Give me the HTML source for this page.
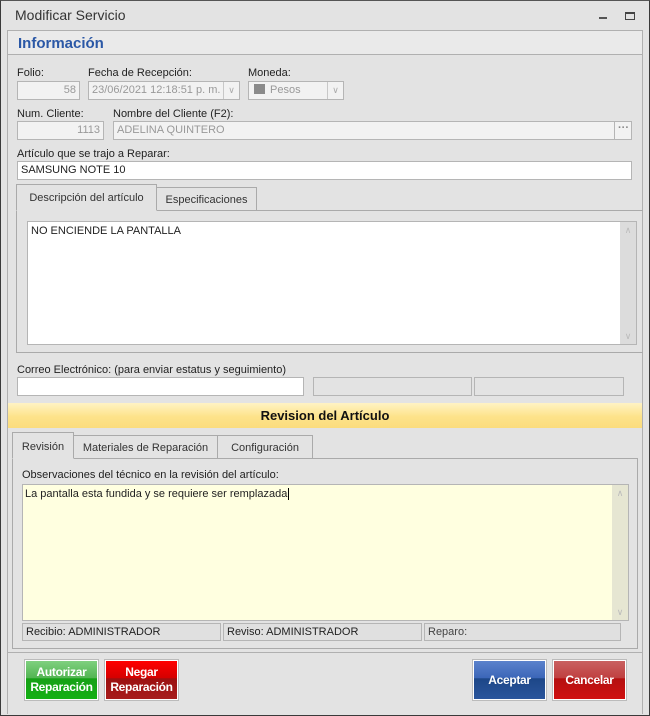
<!DOCTYPE html><html><head><meta charset="utf-8"><style>
*{box-sizing:border-box;margin:0;padding:0}
body{width:650px;height:716px;background:#e3e3e3;font-family:"Liberation Sans",sans-serif;font-size:11px;color:#222;position:relative;overflow:hidden}
.a{position:absolute}
.win{left:0;top:0;width:650px;height:716px;border:1px solid #3a3a3a;border-top-color:#555}
.lbl{position:absolute;font-size:11px;color:#222;white-space:nowrap}
.in{position:absolute;border:1px solid #b5b5b5;background:#f2f2f2;color:#999;font-size:11px;line-height:16px;padding:0 3px;white-space:nowrap;overflow:hidden}
.wh{background:#fff;color:#222}
.dd{position:absolute;border-left:1px solid #c8c8c8;top:0;bottom:0;right:0;width:16px;color:#aaa;font-size:9px;text-align:center;line-height:16px}
.tab{position:absolute;border:1px solid #aaa;border-bottom:none;background:#e3e3e3;font-size:11px;text-align:center;color:#333}
.btn{position:absolute;width:73px;height:40px;border:1px solid #fff;color:#fff;font-weight:bold;font-size:12px;text-align:center;font-family:"Liberation Sans Narrow","Liberation Sans",sans-serif;display:flex;align-items:center;justify-content:center;line-height:15px;box-shadow:0 0 0 1px #bbb;letter-spacing:-0.3px}
.sb{position:absolute;background:#dcdcdc;width:16px;color:#bbb;font-size:9px;text-align:center}
</style></head><body>
<div class="a win"></div>
<div class="a" style="left:15px;top:7px;font-size:14px;color:#333">Modificar Servicio</div>
<div class="a" style="left:599px;top:17px;width:8px;height:2px;background:#555"></div>
<div class="a" style="left:625px;top:12px;width:10px;height:8px;border:1px solid #444;border-top-width:2px"></div>
<!-- panel -->
<div class="a" style="left:7px;top:30px;width:636px;height:684px;border:1px solid #b0b0b0;border-bottom:none"></div>
<div class="a" style="left:8px;top:31px;width:634px;height:24px;background:#eaeaea;border-bottom:1px solid #b0b0b0"></div>
<div class="a" style="left:18px;top:35px;font-size:15px;font-weight:bold;color:#2b58a6">Información</div>

<div class="lbl" style="left:17px;top:67px">Folio:</div>
<div class="lbl" style="left:88px;top:67px">Fecha de Recepción:</div>
<div class="lbl" style="left:248px;top:67px">Moneda:</div>
<div class="in" style="left:17px;top:81px;width:63px;height:19px;text-align:right;line-height:17px">58</div>
<div class="in" style="left:88px;top:81px;width:152px;height:19px;line-height:17px">23/06/2021 12:18:51 p. m.<span class="dd">∨</span></div>
<div class="in" style="left:248px;top:81px;width:96px;height:19px;line-height:17px"><span style="display:inline-block;width:11px;height:10px;background:#8a8a8a;vertical-align:-1px;margin:0 5px 0 2px"></span>Pesos<span class="dd">∨</span></div>

<div class="lbl" style="left:17px;top:108px">Num. Cliente:</div>
<div class="lbl" style="left:113px;top:108px">Nombre del Cliente (F2):</div>
<div class="in" style="left:17px;top:121px;width:87px;height:19px;text-align:right;line-height:17px">1113</div>
<div class="in" style="left:113px;top:121px;width:502px;height:19px;line-height:17px">ADELINA QUINTERO</div>
<div class="in" style="left:614px;top:121px;width:18px;height:19px;text-align:center;line-height:13px;color:#888;font-weight:bold">···</div>

<div class="lbl" style="left:17px;top:148px">Artículo que se trajo a Reparar:</div>
<div class="in wh" style="left:17px;top:161px;width:615px;height:19px;line-height:17px">SAMSUNG NOTE 10</div>

<div class="a" style="left:16px;top:210px;width:627px;height:143px;border:1px solid #aaa;border-right:none"></div>
<div class="tab" style="left:16px;top:184px;width:141px;height:27px;line-height:27px;border-bottom:1px solid #e3e3e3">Descripción del artículo</div>
<div class="tab" style="left:156px;top:187px;width:101px;height:23px;line-height:25px">Especificaciones</div>
<div class="in wh" style="left:27px;top:221px;width:610px;height:124px;line-height:16px;padding:1px 3px">NO ENCIENDE LA PANTALLA</div>
<div class="sb" style="left:620px;top:222px;height:122px"><div style="margin-top:3px">∧</div><div style="position:absolute;bottom:2px;width:16px">∨</div></div>

<div class="lbl" style="left:17px;top:364px">Correo Electrónico: (para enviar estatus y seguimiento)</div>
<div class="in wh" style="left:17px;top:377px;width:287px;height:19px"></div>
<div class="in" style="left:313px;top:377px;width:159px;height:19px;background:#e3e3e3"></div>
<div class="in" style="left:474px;top:377px;width:150px;height:19px;background:#e3e3e3"></div>

<div class="a" style="left:8px;top:403px;width:634px;height:25px;background:linear-gradient(#fff3c4,#fde38a 55%,#fbdc7d);text-align:center;font-weight:bold;font-size:13px;line-height:26px;color:#111">Revision del Artículo</div>

<div class="a" style="left:12px;top:458px;width:626px;height:191px;border:1px solid #aaa"></div>
<div class="tab" style="left:12px;top:432px;width:62px;height:27px;line-height:28px;border-bottom:1px solid #e3e3e3">Revisión</div>
<div class="tab" style="left:73px;top:435px;width:145px;height:23px;line-height:25px">Materiales de Reparación</div>
<div class="tab" style="left:217px;top:435px;width:96px;height:23px;line-height:25px">Configuración</div>
<div class="lbl" style="left:22px;top:469px">Observaciones del técnico en la revisión del artículo:</div>
<div class="in wh" style="left:22px;top:484px;width:607px;height:137px;background:#ffffe0;line-height:16px;padding:1px 2px">La pantalla esta fundida y se requiere ser remplazada<span style="border-left:1px solid #000;margin-left:1px"></span></div>
<div class="sb" style="left:612px;top:485px;height:135px;background:#e6e6d2"><div style="margin-top:3px">∧</div><div style="position:absolute;bottom:2px;width:16px">∨</div></div>
<div class="in" style="left:22px;top:623px;width:199px;height:18px;background:#e0e0e0;color:#222;line-height:16px">Recibio: ADMINISTRADOR</div>
<div class="in" style="left:223px;top:623px;width:199px;height:18px;background:#e0e0e0;color:#222;line-height:16px">Reviso: ADMINISTRADOR</div>
<div class="in" style="left:424px;top:623px;width:197px;height:18px;background:#e0e0e0;color:#444;line-height:16px">Reparo:</div>

<div class="a" style="left:8px;top:652px;width:634px;height:1px;background:#b0b0b0"></div>
<div class="btn" style="left:25px;top:660px;background:linear-gradient(#7fd07f,#52b552 45%,#16a016 46%,#14b014)">Autorizar<br>Reparación</div>
<div class="btn" style="left:105px;top:660px;background:linear-gradient(#f00,#d40000 45%,#9c1010 46%,#a71c1c)">Negar<br>Reparación</div>
<div class="btn" style="left:473px;top:660px;background:linear-gradient(#5b82cc,#3b66b8 45%,#1d4788 46%,#2a559c)">Aceptar</div>
<div class="btn" style="left:553px;top:660px;background:linear-gradient(#c96060,#c04040 45%,#b41010 46%,#d01010)">Cancelar</div>
</body></html>
